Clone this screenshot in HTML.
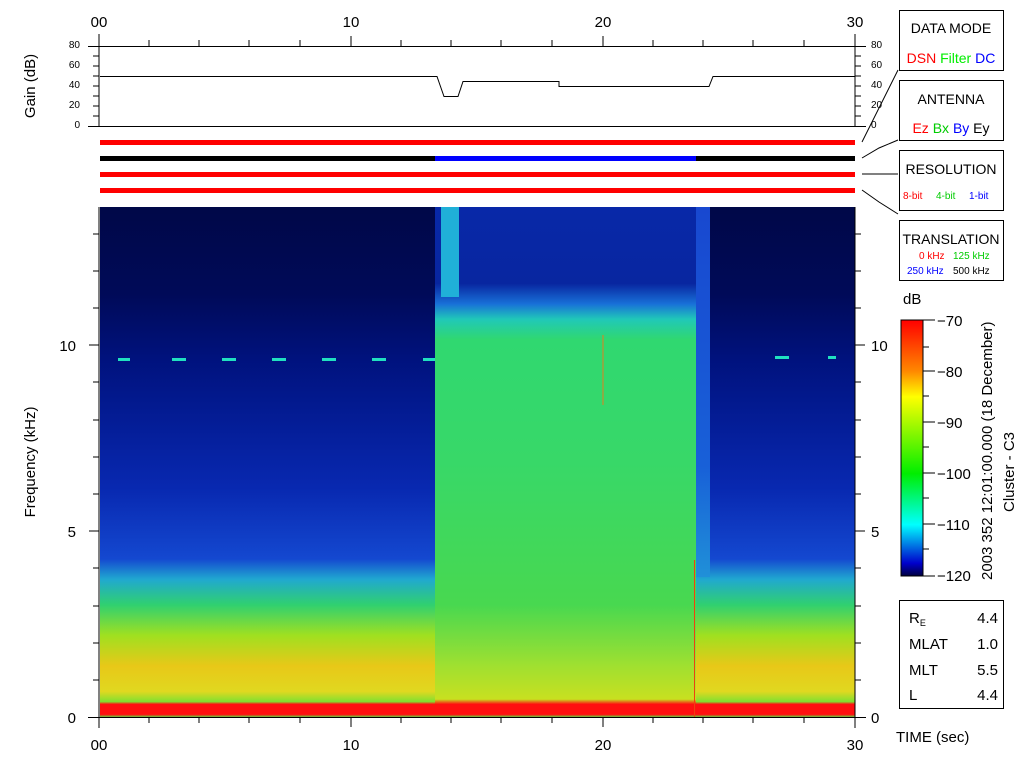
<!DOCTYPE html>
<html><head><meta charset="utf-8"><style>
html,body{margin:0;padding:0;background:#fff;width:1024px;height:768px;overflow:hidden}
svg{display:block}
text{font-family:"Liberation Sans",sans-serif;}
</style></head><body>
<svg width="1024" height="768" viewBox="0 0 1024 768" xmlns="http://www.w3.org/2000/svg">
<defs>
<linearGradient id="q" x1="0" y1="207" x2="0" y2="717" gradientUnits="userSpaceOnUse">
<stop offset="0" stop-color="#000848"/>
<stop offset="0.17" stop-color="#000a58"/>
<stop offset="0.30" stop-color="#00127e"/>
<stop offset="0.55" stop-color="#0828b0"/>
<stop offset="0.69" stop-color="#1448d0"/>
<stop offset="0.73" stop-color="#20a8d0"/>
<stop offset="0.78" stop-color="#30d070"/>
<stop offset="0.84" stop-color="#a0e020"/>
<stop offset="0.90" stop-color="#e8c818"/>
<stop offset="0.95" stop-color="#e0d820"/>
<stop offset="0.97" stop-color="#80e030"/>
<stop offset="0.975" stop-color="#ff1010"/>
<stop offset="0.995" stop-color="#ff1010"/>
<stop offset="1" stop-color="#60d040"/>
</linearGradient>
<linearGradient id="m" x1="0" y1="207" x2="0" y2="717" gradientUnits="userSpaceOnUse">
<stop offset="0" stop-color="#0828a8"/>
<stop offset="0.15" stop-color="#0826a0"/>
<stop offset="0.19" stop-color="#1870d8"/>
<stop offset="0.22" stop-color="#20c8b8"/>
<stop offset="0.26" stop-color="#30d870"/>
<stop offset="0.5" stop-color="#38d868"/>
<stop offset="0.78" stop-color="#48d850"/>
<stop offset="0.90" stop-color="#a0e030"/>
<stop offset="0.965" stop-color="#c8e020"/>
<stop offset="0.975" stop-color="#ff1010"/>
<stop offset="0.995" stop-color="#ff1010"/>
<stop offset="1" stop-color="#60d040"/>
</linearGradient>
<linearGradient id="s" x1="0" y1="207" x2="0" y2="577" gradientUnits="userSpaceOnUse">
<stop offset="0" stop-color="#1848d0"/>
<stop offset="0.7" stop-color="#1860d8"/>
<stop offset="1" stop-color="#2090d8"/>
</linearGradient>
<linearGradient id="cb" x1="0" y1="0" x2="0" y2="1">
<stop offset="0" stop-color="#ff0000"/>
<stop offset="0.2" stop-color="#ff8800"/>
<stop offset="0.3" stop-color="#ffff00"/>
<stop offset="0.6" stop-color="#00ee00"/>
<stop offset="0.8" stop-color="#00ffff"/>
<stop offset="0.95" stop-color="#0000cc"/>
<stop offset="1" stop-color="#000040"/>
</linearGradient>
</defs>

<!-- top axis -->
<g fill="#000" font-size="15" text-anchor="middle">
<text x="99" y="27">00</text><text x="351" y="27">10</text><text x="603" y="27">20</text><text x="855" y="27">30</text>
</g>
<g stroke="#000" stroke-width="1" fill="none">
<line x1="99" y1="34" x2="99" y2="126"/>
<line x1="855" y1="34" x2="855" y2="126"/>
<line x1="88" y1="46.5" x2="866" y2="46.5"/>
<line x1="88" y1="126.5" x2="866" y2="126.5"/>
<path d="M149 40v6M199 40v6M249 40v6M300 40v6M351 36v10M401 40v6M451 40v6M501 40v6M552 40v6M603 36v10M653 40v6M703 40v6M753 40v6M804 40v6"/>
<path d="M93 56h6M93 66h6M93 76h6M93 86h6M93 96h6M93 106h6M93 116h6M855 56h6M855 66h6M855 76h6M855 86h6M855 96h6M855 106h6M855 116h6"/>
<path d="M100 76.5H437L444 96.5H458L463 81.5H559V86.5H709L713 76.5H855"/>
</g>
<g font-family="Liberation Mono" font-size="10" fill="#000" text-anchor="end">
<text x="80" y="48">80</text><text x="80" y="68">60</text><text x="80" y="88">40</text><text x="80" y="108">20</text><text x="80" y="128">0</text>
</g>
<g font-family="Liberation Mono" font-size="10" fill="#000">
<text x="871" y="48">80</text><text x="871" y="68">60</text><text x="871" y="88">40</text><text x="871" y="108">20</text><text x="871" y="128">0</text>
</g>
<text transform="translate(35,86) rotate(-90)" font-size="15" text-anchor="middle">Gain (dB)</text>

<!-- bars -->
<rect x="100" y="140" width="755" height="5" fill="#f00"/>
<rect x="100" y="156" width="335" height="5" fill="#000"/>
<rect x="435" y="156" width="261" height="5" fill="#00f"/>
<rect x="696" y="156" width="159" height="5" fill="#000"/>
<rect x="100" y="172" width="755" height="5" fill="#f00"/>
<rect x="100" y="188" width="755" height="5" fill="#f00"/>
<g stroke="#000" fill="none">
<path d="M862 142L898 70"/><path d="M862 158L879 148L898 140"/><path d="M862 174L898 174"/><path d="M862 190L879 202L898 214"/>
</g>

<!-- spectrogram -->
<rect x="100" y="207" width="335" height="510" fill="url(#q)"/>
<rect x="435" y="207" width="261" height="510" fill="url(#m)"/>
<rect x="696" y="207" width="159" height="510" fill="url(#q)"/>
<rect x="696" y="207" width="14" height="370" fill="url(#s)"/>
<rect x="441" y="207" width="18" height="90" fill="#20b0d8"/>
<line x1="603" y1="335" x2="603" y2="405" stroke="#e08020"/>
<line x1="694.5" y1="560" x2="694.5" y2="717" stroke="#f04010"/>
<g fill="#20e0c0">
<rect x="118" y="358" width="12" height="3"/><rect x="172" y="358" width="14" height="3"/><rect x="222" y="358" width="14" height="3"/><rect x="272" y="358" width="14" height="3"/><rect x="322" y="358" width="14" height="3"/><rect x="372" y="358" width="14" height="3"/><rect x="423" y="358" width="12" height="3"/><rect x="775" y="356" width="14" height="3"/><rect x="828" y="356" width="8" height="3"/>
</g>
<g stroke="#000" fill="none">
<line x1="99" y1="207" x2="99" y2="728"/>
<line x1="855" y1="207" x2="855" y2="728"/>
<line x1="88" y1="717.5" x2="866" y2="717.5"/>
<path d="M149 717v6M199 717v6M249 717v6M300 717v6M351 717v10M401 717v6M451 717v6M501 717v6M552 717v6M603 717v10M653 717v6M703 717v6M753 717v6M804 717v6"/>
<path d="M93 680h6M93 643h6M93 606h6M93 568h6M89 531h10M93 494h6M93 457h6M93 420h6M93 382h6M89 345h10M93 308h6M93 271h6M93 234h6"/>
<path d="M855 680h6M855 643h6M855 606h6M855 568h6M855 531h10M855 494h6M855 457h6M855 420h6M855 382h6M855 345h10M855 308h6M855 271h6M855 234h6"/>
</g>
<g font-size="15" fill="#000">
<text x="76" y="723" text-anchor="end">0</text><text x="76" y="537" text-anchor="end">5</text><text x="76" y="351" text-anchor="end">10</text>
<text x="871" y="723">0</text><text x="871" y="537">5</text><text x="871" y="351">10</text>
<text x="99" y="750" text-anchor="middle">00</text><text x="351" y="750" text-anchor="middle">10</text><text x="603" y="750" text-anchor="middle">20</text><text x="855" y="750" text-anchor="middle">30</text>
<text x="896" y="742">TIME (sec)</text>
<text x="903" y="304">dB</text>
</g>
<text transform="translate(35,462) rotate(-90)" font-size="15" text-anchor="middle">Frequency (kHz)</text>

<!-- right boxes -->
<g stroke="#000" fill="#fff">
<rect x="899.5" y="10.5" width="104" height="60"/>
<rect x="899.5" y="80.5" width="104" height="60"/>
<rect x="899.5" y="150.5" width="104" height="60"/>
<rect x="899.5" y="220.5" width="104" height="60"/>
<rect x="899.5" y="600.5" width="104" height="108"/>
</g>
<g font-size="14" text-anchor="middle">
<text x="951" y="33">DATA MODE</text>
<text x="951" y="104">ANTENNA</text>
<text x="951" y="174">RESOLUTION</text>
<text x="951" y="244">TRANSLATION</text>
</g>
<text x="951" y="63" font-size="14" text-anchor="middle"><tspan fill="#f00">DSN</tspan> <tspan fill="#0e0">Filter</tspan> <tspan fill="#00f">DC</tspan></text>
<text x="951" y="133" font-size="14" text-anchor="middle"><tspan fill="#f00">Ez</tspan> <tspan fill="#0c0">Bx</tspan> <tspan fill="#00f">By</tspan> <tspan fill="#000">Ey</tspan></text>
<g font-family="Liberation Mono" font-size="10">
<text x="903" y="199"><tspan fill="#f00">8-bit</tspan><tspan fill="#0c0" x="936">4-bit</tspan><tspan fill="#00f" x="969">1-bit</tspan></text>
<text x="919" y="259" fill="#f00">0 kHz</text><text x="953" y="259" fill="#0c0">125 kHz</text>
<text x="907" y="274" fill="#00f">250 kHz</text><text x="953" y="274" fill="#000">500 kHz</text>
</g>
<rect x="901" y="320" width="22" height="256" fill="url(#cb)" stroke="#000"/>
<g stroke="#000"><path d="M923 320h12M923 347h6M923 371h6M923 396h6M923 422h12M923 447h6M923 473h6M923 498h6M923 524h12M923 549h6M923 576h12M923 473h12M923 371h12"/></g>
<g font-size="15"><text x="937" y="326">−70</text><text x="937" y="377">−80</text><text x="937" y="428">−90</text><text x="937" y="479">−100</text><text x="937" y="530">−110</text><text x="937" y="581">−120</text></g>
<text transform="translate(992,580) rotate(-90)" font-size="15">2003 352 12:01:00.000 (18 December)</text>
<text transform="translate(1014,512) rotate(-90)" font-size="15">Cluster - C3</text>
<g font-size="15">
<text x="909" y="623">R<tspan font-size="9" dy="3">E</tspan></text><text x="909" y="649">MLAT</text><text x="909" y="675">MLT</text><text x="909" y="700">L</text>
<text x="998" y="623" text-anchor="end">4.4</text><text x="998" y="649" text-anchor="end">1.0</text><text x="998" y="675" text-anchor="end">5.5</text><text x="998" y="700" text-anchor="end">4.4</text>
</g>
</svg>
</body></html>
